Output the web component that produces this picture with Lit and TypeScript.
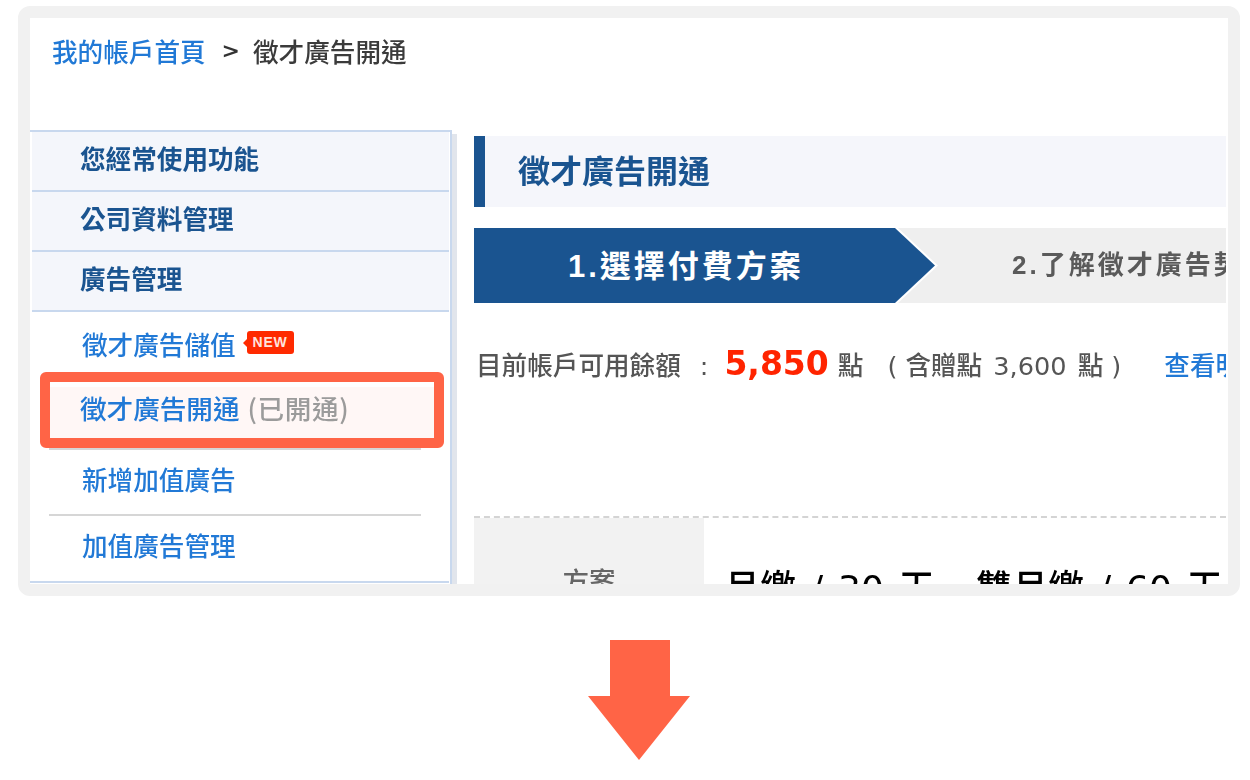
import { LitElement, html, css } from "lit";
import { customElement } from "lit/decorators.js";

@customElement("app-root")
export class AppRoot extends LitElement {
  static styles = css`
    :host {
      display: block;
      width: 1250px;
      height: 780px;
      background: #fff;
      overflow: hidden;
      font-family: "Noto Sans CJK TC", "Liberation Sans", sans-serif;
      font-size: 25.6px;
      color: #444;
    }
    .frame {
      box-sizing: border-box;
      width: 1222px;
      height: 590px;
      margin: 6px 0 0 18px;
      border: 12px solid #f1f1f1;
      border-radius: 12px;
      background: #fff;
    }
    .inner {
      height: 566px;
      overflow: hidden;
      filter: blur(0.35px);
    }
    .crumb {
      box-sizing: border-box;
      height: 112px;
      padding: 15px 0 0 22px;
      line-height: 36px;
      display: flex;
      color: #3b3b3b;
      font-size: 25.6px;
      font-weight: 500;
    }
    .crumb a { color: #2179d6; }
    .crumb .sep {
      margin: 0 13px 0 16px;
      color: #333;
      font: 700 22px/36px "DejaVu Sans", sans-serif;
    }
    .body { display: flex; }
    .side-wrap { display: flex; flex: none; }
    .side {
      box-sizing: border-box;
      width: 422px;
      height: 454px;
      border-top: 2px solid #c8d8ee;
      border-right: 2px solid #c8d8ee;
      padding-right: 1px;
    }
    .shade {
      width: 5px;
      height: 450px;
      margin-top: 4px;
      background: #e1e5ec;
    }
    .head {
      box-sizing: border-box;
      height: 60px;
      margin-left: 2px;
      padding: 0 0 8px 48px;
      background: #f4f6fb;
      border-bottom: 2px solid #c8d8ee;
      display: flex;
      align-items: center;
      font-weight: 700;
      color: #1a5490;
    }
    .item {
      box-sizing: border-box;
      position: relative;
      display: flex;
      align-items: center;
      padding: 0 0 8px 52px;
      color: #2179d6;
      font-weight: 500;
    }
    .i1 { height: 70px; }
    .i2 { height: 66px; padding: 0 0 16px 50px; font-size: 26.6px; }
    .i3 { height: 64px; }
    .i4 { height: 65px; padding-bottom: 9px; }
    .rule { height: 2px; margin: 0 28px 0 19px; background: #d6d6d6; }
    .bottom { height: 2px; background: #c8d8ee; }
    .label { position: relative; z-index: 1; }
    .grey { color: #9b9b9b; margin-left: 2px; letter-spacing: 0.6px; }
    .marker {
      box-sizing: border-box;
      position: absolute;
      left: 10px;
      top: -10px;
      width: 404px;
      height: 76px;
      border: 10px solid #ff6446;
      border-radius: 6px;
      background: linear-gradient(#fff 5px, #fff7f6 5px);
    }
    .new {
      position: relative;
      margin: 0 0 2px 11px;
      width: 47px;
      height: 23px;
      background: #ff2a00;
      border-radius: 3px;
      color: #ffe3de;
      font: 700 14px/23px "Liberation Sans", sans-serif;
      letter-spacing: 0.8px;
      text-align: center;
    }
    .new::before {
      content: "";
      position: absolute;
      left: -4px;
      top: 8px;
      border-right: 4px solid #ff2a00;
      border-top: 4px solid transparent;
      border-bottom: 4px solid transparent;
    }
    .main {
      width: 752px;
      margin-left: 17px;
      padding-top: 6px;
      overflow: hidden;
      flex: none;
    }
    .title {
      box-sizing: border-box;
      height: 71px;
      border-left: 11px solid #1a5490;
      background: #f5f6fb;
      padding: 0 0 6px 33px;
      display: flex;
      align-items: center;
      font-size: 32px;
      font-weight: 700;
      color: #1a5490;
    }
    .steps {
      display: flex;
      height: 75px;
      margin-top: 21px;
      background: #efefef;
      white-space: nowrap;
      overflow: hidden;
      font-family: "Liberation Sans", "Noto Sans CJK TC", sans-serif;
    }
    .edge {
      flex: none;
      width: 464px;
      background: #fff;
      clip-path: polygon(0 0, 424px 0, 464px 37.5px, 424px 75px, 0 75px);
    }
    .active {
      box-sizing: border-box;
      width: 461px;
      height: 75px;
      padding: 1px 0 0 94px;
      background: #1a5490;
      clip-path: polygon(0 0, 421px 0, 461px 37.5px, 421px 75px, 0 75px);
      color: #fff;
      font-size: 31px;
      font-weight: 700;
      letter-spacing: 3px;
      line-height: 75px;
    }
    .next {
      margin-left: 74px;
      padding-bottom: 6px;
      color: #5a5a5a;
      font-size: 26px;
      font-weight: 700;
      letter-spacing: 3px;
      line-height: 75px;
    }
    .balance {
      box-sizing: border-box;
      height: 213px;
      padding: 39px 0 0 2px;
      line-height: 48px;
      white-space: nowrap;
      color: #555;
      display: flex;
      align-items: baseline;
      font-weight: 500;
      font-family: "DejaVu Sans", "Noto Sans CJK TC", sans-serif;
      word-spacing: 3px;
    }
    .colon { margin: 0 16px 0 19px; }
    .amount {
      font: 700 33px "DejaVu Sans", sans-serif;
      color: #ff2400;
      margin: 0 9px 0 0;
    }
    .paren { margin: 0 8px 0 24px; }
    .paren2 { margin: 0 0 0 8px; }
    .link { margin-left: 43px; color: #2179d6; }
    .plan {
      display: flex;
      border-top: 2px dashed #d4d4d4;
    }
    .cell {
      box-sizing: border-box;
      width: 230px;
      height: 120px;
      flex: none;
      background: #f2f2f2;
      color: #666;
      text-align: center;
      font-size: 26.6px;
      font-weight: 500;
      padding-top: 42px;
    }
    .plan-title {
      padding: 41px 0 0 20px;
      font-family: "DejaVu Sans", "Noto Sans CJK TC", sans-serif;
      font-size: 36px;
      font-weight: 500;
      color: #000;
      white-space: nowrap;
      word-spacing: 3.5px;
    }
    .arrow { display: block; margin: 44px 0 0 588px; }
  `;

  render() {
    return html`
      <div class="frame">
        <div class="inner">
          <div class="crumb">
            <a>我的帳戶首頁</a><span class="sep">&gt;</span><span>徵才廣告開通</span>
          </div>
          <div class="body">
            <div class="side-wrap">
              <div class="side">
                <div class="head">您經常使用功能</div>
                <div class="head">公司資料管理</div>
                <div class="head">廣告管理</div>
                <div class="item i1">
                  <span class="label">徵才廣告儲值</span><span class="new">NEW</span>
                </div>
                <div class="item i2">
                  <div class="marker"></div>
                  <span class="label">徵才廣告開通 <span class="grey">(已開通)</span></span>
                </div>
                <div class="rule"></div>
                <div class="item i3"><span class="label">新增加值廣告</span></div>
                <div class="rule"></div>
                <div class="item i4"><span class="label">加值廣告管理</span></div>
                <div class="bottom"></div>
              </div>
              <div class="shade"></div>
            </div>
            <div class="main">
              <div class="title">徵才廣告開通</div>
              <div class="steps">
                <div class="edge"><div class="active">1.選擇付費方案</div></div>
                <div class="next">2.了解徵才廣告契約</div>
              </div>
              <div class="balance">
                <span>目前帳戶可用餘額</span><span class="colon">:</span><span class="amount">5,850</span><span>點</span><span class="paren">(</span><span>含贈點 3,600 點</span><span class="paren2">)</span><span class="link">查看明細</span>
              </div>
              <div class="plan">
                <div class="cell">方案</div>
                <div class="plan-title">月繳 / 30 天 . 雙月繳 / 60 天</div>
              </div>
            </div>
          </div>
        </div>
      </div>
      <svg class="arrow" width="102" height="120" viewBox="0 0 102 120">
        <polygon fill="#ff6446" points="22,0 82,0 82,56 102,56 51,120 0,56 22,56"></polygon>
      </svg>
    `;
  }
}
